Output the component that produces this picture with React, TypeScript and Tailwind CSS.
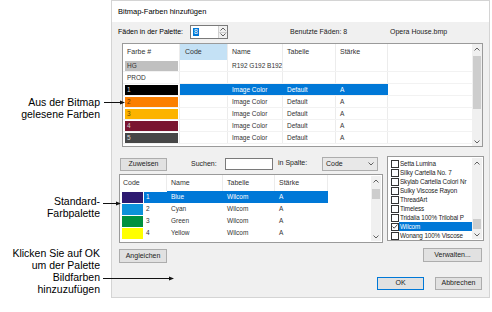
import React from 'react'

type Zeile = {
  farbe: string
  bg: string
  fg: string
  name: string
  tab: string
  st: string
  sel?: boolean
}

const oben: Zeile[] = [
  { farbe: 'HG', bg: '#c0c0c0', fg: '#333', name: 'R192 G192 B192', tab: '', st: '' },
  { farbe: 'PROD', bg: 'transparent', fg: '#333', name: '', tab: '', st: '' },
  { farbe: '1', bg: '#000000', fg: '#ddd', name: 'Image Color', tab: 'Default', st: 'A', sel: true },
  { farbe: '2', bg: '#fb7f00', fg: '#6b3a00', name: 'Image Color', tab: 'Default', st: 'A' },
  { farbe: '3', bg: '#fcb300', fg: '#6b4a00', name: 'Image Color', tab: 'Default', st: 'A' },
  { farbe: '4', bg: '#7a1530', fg: '#ccc', name: 'Image Color', tab: 'Default', st: 'A' },
  { farbe: '5', bg: '#474747', fg: '#ddd', name: 'Image Color', tab: 'Default', st: 'A' },
]

const unten = [
  { code: '1', bg: '#2d1a70', name: 'Blue', sel: true },
  { code: '2', bg: '#0c92da', name: 'Cyan' },
  { code: '3', bg: '#00913f', name: 'Green' },
  { code: '4', bg: '#ffff00', name: 'Yellow' },
]

// nur der sichtbare Teil der Namen
const garne = [
  'Setta Lumina',
  'Silky Cartella No. 7',
  'Skylab Cartella Colori Nr',
  'Sulky Viscose Rayon',
  'ThreadArt',
  'Timeless',
  'Tridalia 100% Trilobal P',
  'Wilcom',
  'Wonang 100% Viscose',
]

function Pfeil({ hoch }: { hoch?: boolean }) {
  return (
    <svg width="6" height="4" viewBox="0 0 6 4">
      <path
        d={hoch ? 'M0.5 3.5 L3 1 L5.5 3.5' : 'M0.5 0.5 L3 3 L5.5 0.5'}
        fill="none"
        stroke="#606060"
        strokeWidth="1"
      />
    </svg>
  )
}

function Leiste({ oberKlasse, daumenKlasse }: { oberKlasse: string; daumenKlasse: string }) {
  return (
    <div className="flex h-full w-[10px] shrink-0 flex-col bg-[#f0f0f0]">
      <div className="flex h-[9px] items-center justify-center">
        <Pfeil hoch />
      </div>
      <div className={oberKlasse} />
      <div className={daumenKlasse} />
      <div className="flex-1" />
      <div className="flex h-[9px] items-center justify-center">
        <Pfeil />
      </div>
    </div>
  )
}

function Knopf({ text, klasse }: { text: string; klasse: string }) {
  return (
    <div
      className={`flex items-center justify-center border bg-[#e1e1e1] text-[7px] text-[#222] ${klasse}`}
    >
      {text}
    </div>
  )
}

function ObereTabelle() {
  const zelle = 'border-r border-[#ececec] pl-[4px] flex items-center'
  const blau = 'flex items-center bg-[#0078d7] pl-[4px] text-white'
  return (
    <div className="ml-[10px] mt-[4px] flex h-[104px] w-[361px] border border-[#9a9a9a] bg-white">
      <div className="flex-1">
        <div className="grid h-[16px] grid-cols-[57px_48px_55px_53px_52px_1fr] whitespace-nowrap text-[7px] text-[#333]">
          <div className={zelle}>Farbe #</div>
          <div className="flex items-center border-r border-[#ececec] bg-[#c4e1f5] pl-[5px]">Code</div>
          <div className={zelle}>Name</div>
          <div className={zelle}>Tabelle</div>
          <div className={zelle}>Stärke</div>
          <div />
        </div>
        {oben.map((z) => (
          <div
            key={z.farbe}
            className="grid h-[12px] grid-cols-[57px_48px_55px_53px_52px_1fr] whitespace-nowrap border-b border-[#f2f2f2] text-[6.5px] text-[#333]"
          >
            <div className="flex border-r border-[#ececec] py-[0.5px] pl-[2px] pr-[1px]">
              <div
                className="flex flex-1 items-center pl-[2px]"
                style={{ backgroundColor: z.bg, color: z.fg }}
              >
                {z.farbe}
              </div>
            </div>
            <div className={z.sel ? 'bg-[#0078d7]' : 'border-r border-[#ececec]'} />
            <div className={z.sel ? blau : zelle}>{z.name}</div>
            <div className={z.sel ? blau : zelle}>{z.tab}</div>
            <div className={z.sel ? blau : zelle}>{z.st}</div>
            <div />
          </div>
        ))}
      </div>
      <Leiste oberKlasse="h-[3px]" daumenKlasse="mx-[1px] h-[53px] bg-[#cdcdcd]" />
    </div>
  )
}

function UntereTabelle() {
  return (
    <div className="mt-[3px] flex h-[69px] w-[264px] border border-[#9a9a9a] bg-white">
      <div className="flex-1">
        <div className="grid h-[16px] grid-cols-[47px_56px_52px_53px_1fr] text-[7px] text-[#333]">
          <div className="flex items-center border-r border-[#ececec] pl-[3px]">Code</div>
          <div className="flex items-center border-r border-[#ececec] pl-[4px]">Name</div>
          <div className="flex items-center border-r border-[#ececec] pl-[4px]">Tabelle</div>
          <div className="flex items-center border-r border-[#ececec] pl-[4px]">Stärke</div>
          <div />
        </div>
        {unten.map((z) => (
          <div
            key={z.code}
            className="grid h-[12px] grid-cols-[47px_56px_52px_53px_1fr] whitespace-nowrap text-[6.5px] text-[#333]"
          >
            <div className="flex py-[0.5px] pl-[2px]">
              <div className="w-[21px]" style={{ backgroundColor: z.bg }} />
              <div
                className={`ml-[1px] flex flex-1 items-center pl-[2px] ${z.sel ? 'bg-[#0078d7] text-white' : ''}`}
              >
                {z.code}
              </div>
            </div>
            <div className={`flex items-center pl-[4px] ${z.sel ? 'bg-[#0078d7] text-white' : ''}`}>{z.name}</div>
            <div className={`flex items-center pl-[4px] ${z.sel ? 'bg-[#0078d7] text-white' : ''}`}>Wilcom</div>
            <div className={`flex items-center pl-[4px] ${z.sel ? 'bg-[#0078d7] text-white' : ''}`}>A</div>
            <div />
          </div>
        ))}
      </div>
      <div className="my-[1px] mr-[1px]">
        <Leiste oberKlasse="h-[4px]" daumenKlasse="mx-[1px] h-[10px] bg-[#cdcdcd]" />
      </div>
    </div>
  )
}

function Garnliste() {
  return (
    <div className="flex h-[85px] w-[97px] border border-[#9a9a9a] bg-white">
      <div className="flex-1 pt-[2px]">
        {garne.map((g) => {
          const an = g === 'Wilcom'
          return (
            <div
              key={g}
              className="flex h-[9px] items-center whitespace-nowrap text-[6.3px] tracking-[-0.1px] text-[#222]"
            >
              <div className="ml-[3px] flex h-[8px] w-[8px] shrink-0 items-center justify-center border border-[#333] bg-white">
                {an && (
                  <svg width="6" height="5" viewBox="0 0 6 5">
                    <path d="M0.5 2.5 L2.2 4.2 L5.5 0.5" fill="none" stroke="#333" strokeWidth="0.9" />
                  </svg>
                )}
              </div>
              <div className={`flex h-full flex-1 items-center pl-[1px] ${an ? 'bg-[#0078d7] text-white' : ''}`}>
                {g}
              </div>
            </div>
          )
        })}
      </div>
      <div className="my-[1px] mr-[1px]">
        <Leiste oberKlasse="h-[52px]" daumenKlasse="mx-[1px] h-[10px] bg-[#cdcdcd]" />
      </div>
    </div>
  )
}

function Dialog() {
  return (
    <div className="flex h-[298px] w-[379px] shrink-0 flex-col border border-[#d4d4d4] bg-[#f0f0f0] text-black">
      <div className="flex h-[21px] items-center bg-white pl-[6px] text-[7.5px]">Bitmap-Farben hinzufügen</div>

      <div className="mt-[3px] flex h-[14px] items-center pl-[6px] text-[7px]">
        <div className="w-[72px]">Fäden in der Palette:</div>
        <div className="flex h-[14px] w-[38px] items-center border border-[#7a7a7a] bg-white">
          <span className="ml-[2px] bg-[#0078d7] px-[1px] leading-[8px] text-white">8</span>
          <div className="flex-1" />
          <div className="flex h-full w-[9px] flex-col border-l border-[#d0d0d0] bg-[#f0f0f0]">
            <div className="flex flex-1 items-center justify-center border-b border-[#d0d0d0]">
              <Pfeil hoch />
            </div>
            <div className="flex flex-1 items-center justify-center">
              <Pfeil />
            </div>
          </div>
        </div>
        <div className="ml-[62px] w-[100px] text-[#222]">Benutzte Fäden: 8</div>
        <div className="text-[#222]">Opera House.bmp</div>
      </div>

      <ObereTabelle />

      <div className="mt-[9px] flex">
        <div className="ml-[7px] flex w-[264px] flex-col">
          <div className="mt-[1px] flex h-[14px] items-center text-[7px] text-[#222]">
            <Knopf text="Zuweisen" klasse="ml-[1px] h-[13px] w-[47px] border-[#adadad]" />
            <div className="ml-[24px] w-[34px]">Suchen:</div>
            <div className="h-[12px] w-[48px] border border-[#7a7a7a] bg-white" />
            <div className="ml-[5px] w-[44px] self-start pt-[1px]">in Spalte:</div>
            <div className="flex h-[14px] w-[56px] items-center justify-between border border-[#adadad] bg-[#e8e8e8] pl-[3px] pr-[3px]">
              <span>Code</span>
              <Pfeil />
            </div>
          </div>
          <UntereTabelle />
          <Knopf text="Angleichen" klasse="mt-[6px] h-[14px] w-[48px] border-[#adadad]" />
        </div>
        <div className="ml-[4px] flex flex-col">
          <Garnliste />
          <Knopf text="Verwalten..." klasse="mr-[2px] mt-[7px] h-[14px] w-[59px] self-end border-[#adadad]" />
        </div>
      </div>

      <div className="mt-[14px] flex justify-end gap-[11px] pr-[7px]">
        <Knopf text="OK" klasse="h-[13px] w-[47px] border-[#0078d7]" />
        <Knopf text="Abbrechen" klasse="h-[13px] w-[47px] border-[#adadad]" />
      </div>
    </div>
  )
}

export default function App() {
  return (
    <div className="relative flex h-[312px] w-[492px] bg-white font-['Liberation_Sans',Arial,sans-serif]">
      <div className="flex w-[111px] shrink-0 flex-col items-end pr-[11px] text-right text-[10.5px] leading-[12px] text-black">
        <p className="mt-[96px]">
          Aus der Bitmap
          <br />
          gelesene Farben
        </p>
        <p className="mt-[75px]">
          Standard-
          <br />
          Farbpalette
        </p>
        <p className="mt-[28px]">
          Klicken Sie auf OK
          <br />
          um der Palette
          <br />
          Bildfarben
          <br />
          hinzuzufügen
        </p>
      </div>
      <Dialog />
      <svg className="pointer-events-none absolute left-0 top-0" width="492" height="312">
        <line x1="104" y1="102.5" x2="121" y2="102.5" stroke="#111" strokeWidth="1" />
        <polygon points="125,102.5 120,100.5 120,104.5" fill="#111" />
        <line x1="103" y1="203.5" x2="117" y2="203.5" stroke="#111" strokeWidth="1" />
        <polygon points="121,203.5 116,201.5 116,205.5" fill="#111" />
        <line x1="103" y1="278.5" x2="170" y2="278.5" stroke="#111" strokeWidth="1" />
        <polygon points="174,278.5 169,276.5 169,280.5" fill="#111" />
      </svg>
    </div>
  )
}
